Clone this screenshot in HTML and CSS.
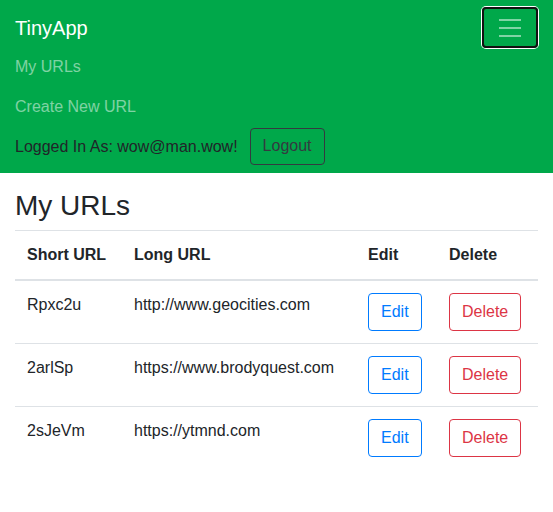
FILE: index.html
```html
<!DOCTYPE html>
<html>
<head>
<meta charset="utf-8">
<link rel="stylesheet" href="styles.css">
</head>
<body>
<nav class="navbar">
  <div class="navbar-top">
    <a class="brand" href="#">TinyApp</a>
    <button class="toggler" type="button">
      <svg width="30" height="30" viewBox="0 0 30 30"><path d="M4 7h22M4 15h22M4 23h22" stroke="rgba(255,255,255,0.5)" stroke-width="2" stroke-linecap="butt" fill="none"/></svg>
    </button>
  </div>
  <ul class="nav">
    <li><a class="nav-link" href="#">My URLs</a></li>
    <li><a class="nav-link" href="#">Create New URL</a></li>
  </ul>
  <div class="login-row">
    <span class="login-text">Logged In As: wow@man.wow!</span>
    <button class="btn btn-dark">Logout</button>
  </div>
</nav>
<main class="content">
  <h3 class="title">My URLs</h3>
  <table class="table">
    <thead>
      <tr><th class="c1">Short URL</th><th class="c2">Long URL</th><th class="c3">Edit</th><th class="c4">Delete</th></tr>
    </thead>
    <tbody>
      <tr><td>Rpxc2u</td><td>http://www.geocities.com</td><td><button class="btn btn-primary">Edit</button></td><td><button class="btn btn-danger">Delete</button></td></tr>
      <tr><td>2arlSp</td><td>https://www.brodyquest.com</td><td><button class="btn btn-primary">Edit</button></td><td><button class="btn btn-danger">Delete</button></td></tr>
      <tr><td>2sJeVm</td><td>https://ytmnd.com</td><td><button class="btn btn-primary">Edit</button></td><td><button class="btn btn-danger">Delete</button></td></tr>
    </tbody>
  </table>
</main>
</body>
</html>
```
FILE: styles.css
```css
* { box-sizing: border-box; }
html, body { margin: 0; padding: 0; }
body {
  font-family: "Liberation Sans", Arial, sans-serif;
  font-size: 16px;
  line-height: 1.5;
  color: #212529;
  background: #fff;
}
.navbar {
  background: #00a84a;
  padding: 7px 15px 8px 15px;
}
.navbar-top {
  display: flex;
  justify-content: space-between;
  align-items: center;
  height: 41px;
}
.brand {
  color: #fff;
  text-decoration: none;
  font-size: 20px;
  line-height: 30px;
}
.toggler {
  width: 56px;
  height: 41px;
  padding: 0;
  background: transparent;
  border: 2px solid #111;
  border-radius: 4px;
  box-shadow: 0 0 0 1px #fff;
  display: flex;
  align-items: center;
  justify-content: center;
}
.toggler svg { display: block; }
.nav {
  list-style: none;
  margin: 0;
  padding: 0;
}
.nav-link {
  display: block;
  padding: 7px 0 9px 0;
  color: rgba(255,255,255,0.5);
  text-decoration: none;
  line-height: 24px;
}
.login-row {
  display: flex;
  align-items: center;
  gap: 12px;
}
.btn {
  font-family: inherit;
  font-size: 16px;
  line-height: 24px;
  padding: 6px 12px;
  border-radius: 4px;
  background: transparent;
  border: 1px solid;
  cursor: pointer;
}
.btn-dark { color: #343a40; border-color: #343a40; padding: 5px 12px 6px 12px; }
.btn-primary { color: #007bff; border-color: #007bff; }
.btn-danger { color: #dc3545; border-color: #dc3545; }
.content { padding: 16px 15px 0 15px; }
.title {
  margin: 0 0 7px 0;
  font-size: 28px;
  font-weight: 500;
  line-height: 1.2;
}
.table {
  width: 100%;
  border-collapse: collapse;
}
.table th, .table td {
  padding: 12px;
  text-align: left;
  vertical-align: top;
  border-top: 1px solid #dee2e6;
}
.table th { font-weight: bold; }
.table thead th { border-bottom: 2px solid #dee2e6; }
.c1 { width: 107px; }
.c2 { width: 234px; }
.c3 { width: 81px; }
.c4 { width: 101px; }
```
